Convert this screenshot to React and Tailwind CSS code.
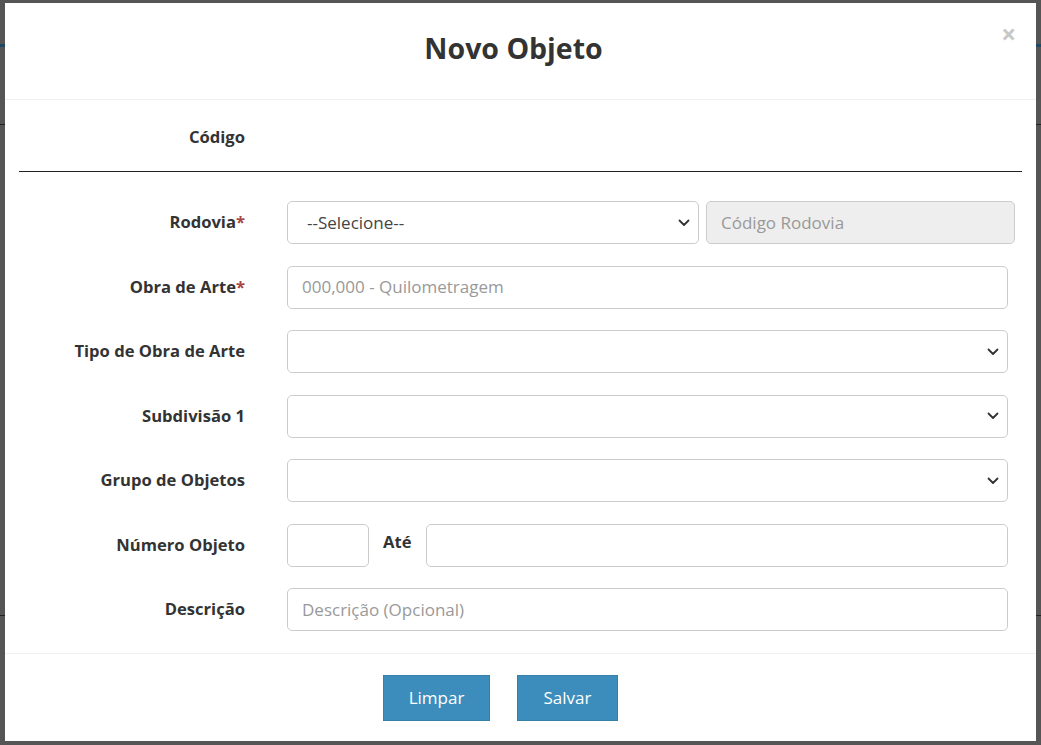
import React from 'react'

const font = { fontFamily: '"Open Sans", Lato, sans-serif' }

function Chevron() {
  return (
    <svg className="absolute right-[8px] top-1/2 -translate-y-1/2" width="12" height="8" viewBox="0 0 12 8" fill="none">
      <path d="M1.5 1.5 L6 6 L10.5 1.5" stroke="#333" strokeWidth="1.8" strokeLinecap="round" strokeLinejoin="round" />
    </svg>
  )
}

function Label({ children, required }) {
  return (
    <div className="w-[226px] shrink-0 text-right text-[16.6px] font-bold text-[#333]">
      {children}
      {required && <span className="text-[#a94442]">*</span>}
    </div>
  )
}

function Field({ placeholder, value, select, disabled, className = '' }) {
  return (
    <div
      className={`relative h-[43px] rounded-[5px] border border-[#ccc] flex items-center text-[17px] ${
        disabled ? 'bg-[#eee]' : 'bg-white'
      } ${value ? 'pl-[19px]' : 'pl-[14px]'} ${className}`}
    >
      {value && <span className="text-[#444]">{value}</span>}
      {placeholder && <span className="text-[#999]">{placeholder}</span>}
      {select && <Chevron />}
    </div>
  )
}

function Row({ label, required, children }) {
  return (
    <div className="flex items-center h-[43px]">
      <Label required={required}>{label}</Label>
      <div className="flex-1 flex items-center pl-[42px] pr-[14px]">{children}</div>
    </div>
  )
}

export default function App() {
  return (
    <div className="relative w-[1041px] h-[745px] overflow-hidden bg-[#555]" style={font}>
      {/* page behind the overlay */}
      <div className="absolute left-0 top-[44px] w-[5px] h-[3px] bg-[#1c4a66]" />
      <div className="absolute right-0 top-[44px] w-[5px] h-[3px] bg-[#1c4a66]" />
      <div className="absolute left-0 top-[124px] w-[5px] h-[1px] bg-[#222]" />
      <div className="absolute right-0 top-[124px] w-[5px] h-[1px] bg-[#222]" />
      <div className="absolute left-0 top-[615px] w-[5px] h-[1px] bg-[#222]" />
      <div className="absolute right-0 top-[615px] w-[5px] h-[1px] bg-[#222]" />

      <div className="ml-[5px] mt-[3px] w-[1031px] h-[738px] bg-white flex flex-col">
        {/* header */}
        <div className="relative h-[97px] border-b border-[#f0f0f0] flex items-center justify-center pr-[14px] shrink-0">
          <h4 className="text-[28.5px] font-bold text-[#333] -mt-[5px]">Novo Objeto</h4>
          <span className="absolute right-[20px] top-[18px] text-[26px] font-bold leading-none text-[#c8c8c8]">×</span>
        </div>

        {/* body */}
        <div className="px-[14px] flex flex-col">
          <div className="flex items-center h-[22px] mt-[26px]">
            <Label>Código</Label>
          </div>
          <div className="mt-[23px] h-[1px] bg-[#222]" />
          <div className="mt-[29px] flex flex-col gap-[21.5px]">
            <Row label="Rodovia" required>
              <Field value="--Selecione--" select className="w-[412px]" />
              <Field placeholder="Código Rodovia" disabled className="ml-[7px] w-[309px] -mr-[6px]" />
            </Row>
            <Row label="Obra de Arte" required>
              <Field placeholder="000,000 - Quilometragem" className="flex-1" />
            </Row>
            <Row label="Tipo de Obra de Arte">
              <Field select className="flex-1" />
            </Row>
            <Row label="Subdivisão 1">
              <Field select className="flex-1" />
            </Row>
            <Row label="Grupo de Objetos">
              <Field select className="flex-1" />
            </Row>
            <Row label="Número Objeto">
              <Field className="w-[82px]" />
              <span className="ml-[14px] mr-[15px] -mt-[6px] text-[16.6px] font-bold text-[#333]">Até</span>
              <Field className="flex-1" />
            </Row>
            <Row label="Descrição">
              <Field placeholder="Descrição (Opcional)" className="flex-1" />
            </Row>
          </div>
        </div>

        {/* footer */}
        <div className="mt-[22px] border-t border-[#f0f0f0] flex-1 flex items-start pt-[21px] pl-[378px]">
          <button className="h-[46px] w-[107px] bg-[#3c8dbc] border border-[#367fa9] text-white text-[17px]">Limpar</button>
          <button className="ml-[27px] h-[46px] w-[101px] bg-[#3c8dbc] border border-[#367fa9] text-white text-[17px]">Salvar</button>
        </div>
      </div>
    </div>
  )
}
